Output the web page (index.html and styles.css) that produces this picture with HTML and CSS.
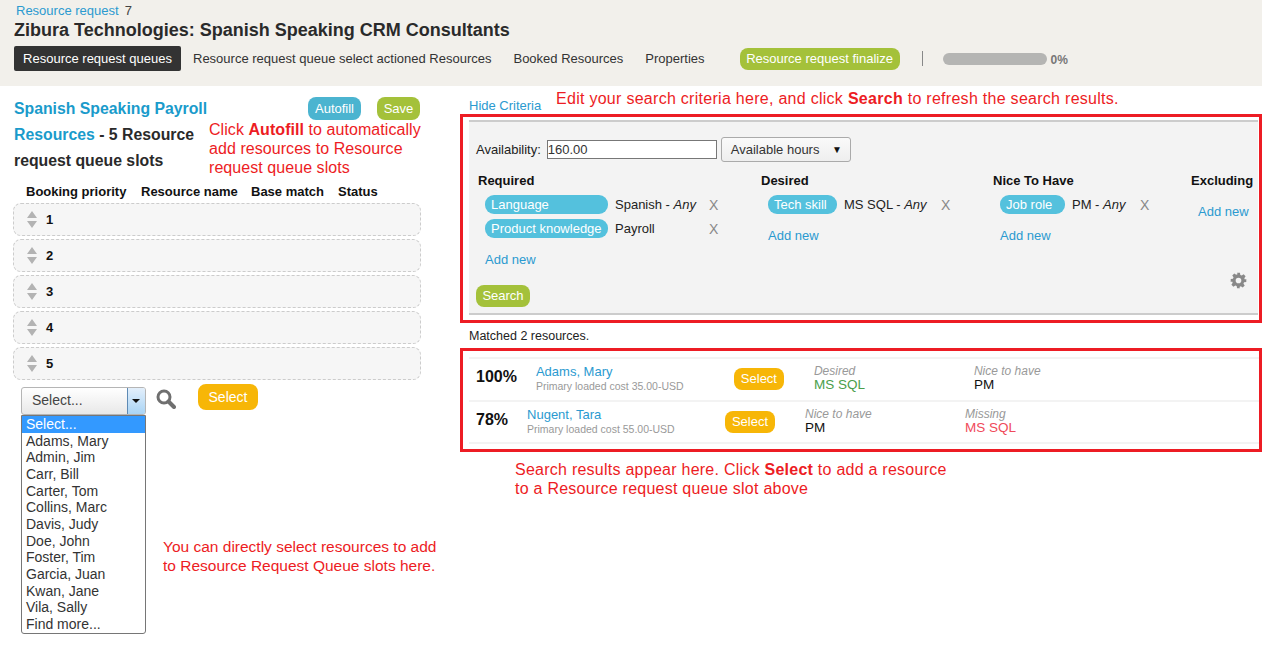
FILE: index.html
```html
<!DOCTYPE html>
<html lang="en">
<head>
    <meta charset="UTF-8">
    <meta name="viewport" content="width=device-width, initial-scale=1.0">
    <title>Resource request 7</title>
    <link rel="stylesheet" href="styles.css">
</head>
<body>

<!-- Page header -->
<div class="header">
    <div class="crumb"><a href="#">Resource request</a><span class="crumb-num">7</span></div>
    <h1 class="title">Zibura Technologies: Spanish Speaking CRM Consultants</h1>
    <div class="tabs">
        <a class="tab active" href="#">Resource request queues</a>
        <a class="tab" href="#">Resource request queue select actioned Resources</a>
        <a class="tab" href="#">Booked Resources</a>
        <a class="tab" href="#">Properties</a>
        <a class="btn finalize" href="#">Resource request finalize</a>
        <span class="divider"></span>
        <span class="progress"></span>
        <span class="progress-label">0%</span>
    </div>
</div>

<div class="main">
    <!-- Left column: queue slots -->
    <div class="left">
        <div class="left-top">
            <h2 class="queue-title">
                <span class="title-line"><a href="#">Spanish Speaking Payroll</a></span>
                <span class="title-line"><a href="#">Resources</a> - 5 Resource</span>
                <span class="title-line">request queue slots</span>
            </h2>
            <div class="left-actions">
                <a class="btn autofill" href="#">Autofill</a>
                <a class="btn save" href="#">Save</a>
            </div>
        </div>

        <div class="slot-head">
            <span class="col-priority">Booking priority</span>
            <span class="col-name">Resource name</span>
            <span class="col-match">Base match</span>
            <span>Status</span>
        </div>

        <div class="slot">
            <svg class="sort" viewBox="0 0 10 17"><path d="M5 0l5 7H0zM0 10h10l-5 7z"/></svg>
            <b>1</b>
        </div>
        <div class="slot">
            <svg class="sort" viewBox="0 0 10 17"><path d="M5 0l5 7H0zM0 10h10l-5 7z"/></svg>
            <b>2</b>
        </div>
        <div class="slot">
            <svg class="sort" viewBox="0 0 10 17"><path d="M5 0l5 7H0zM0 10h10l-5 7z"/></svg>
            <b>3</b>
        </div>
        <div class="slot">
            <svg class="sort" viewBox="0 0 10 17"><path d="M5 0l5 7H0zM0 10h10l-5 7z"/></svg>
            <b>4</b>
        </div>
        <div class="slot">
            <svg class="sort" viewBox="0 0 10 17"><path d="M5 0l5 7H0zM0 10h10l-5 7z"/></svg>
            <b>5</b>
        </div>

        <div class="picker">
            <div class="combo-wrap">
                <div class="combo">
                    <span class="combo-text">Select...</span>
                    <span class="combo-arrow"></span>
                </div>
                <div class="combo-list">
                    <div class="option current">Select...</div>
                    <div class="option">Adams, Mary</div>
                    <div class="option">Admin, Jim</div>
                    <div class="option">Carr, Bill</div>
                    <div class="option">Carter, Tom</div>
                    <div class="option">Collins, Marc</div>
                    <div class="option">Davis, Judy</div>
                    <div class="option">Doe, John</div>
                    <div class="option">Foster, Tim</div>
                    <div class="option">Garcia, Juan</div>
                    <div class="option">Kwan, Jane</div>
                    <div class="option">Vila, Sally</div>
                    <div class="option">Find more...</div>
                </div>
            </div>
            <svg class="lens" viewBox="0 0 20 20">
                <circle cx="8" cy="8" r="6" fill="none" stroke="#6f6f6f" stroke-width="3"/>
                <path d="M12.5 12.5l5.5 5.5" stroke="#6f6f6f" stroke-width="4" stroke-linecap="round"/>
            </svg>
            <a class="btn select-big" href="#">Select</a>
        </div>
    </div>

    <!-- Right column: criteria and results -->
    <div class="right">
        <a class="hide-link" href="#">Hide Criteria</a>

        <div class="red-box criteria-box">
            <div class="criteria">
                <div class="avail">
                    <label class="avail-label">Availability:</label>
                    <input class="avail-input" type="text" value="160.00">
                    <div class="hours">Available hours <span class="hours-arrow">▼</span></div>
                </div>

                <div class="crit-cols">
                    <div class="crit-col">
                        <div class="crit-title">Required</div>
                        <div class="crit-row">
                            <span class="pill wide">Language</span>
                            <span class="crit-value">Spanish - <i>Any</i></span>
                            <span class="x">X</span>
                        </div>
                        <div class="crit-row">
                            <span class="pill wide">Product knowledge</span>
                            <span class="crit-value">Payroll</span>
                            <span class="x">X</span>
                        </div>
                        <a class="add-new" href="#">Add new</a>
                    </div>
                    <div class="crit-col">
                        <div class="crit-title">Desired</div>
                        <div class="crit-row">
                            <span class="pill tech">Tech skill</span>
                            <span class="crit-value">MS SQL - <i>Any</i></span>
                            <span class="x">X</span>
                        </div>
                        <a class="add-new" href="#">Add new</a>
                    </div>
                    <div class="crit-col">
                        <div class="crit-title">Nice To Have</div>
                        <div class="crit-row">
                            <span class="pill job">Job role</span>
                            <span class="crit-value short">PM - <i>Any</i></span>
                            <span class="x">X</span>
                        </div>
                        <a class="add-new" href="#">Add new</a>
                    </div>
                    <div class="crit-col">
                        <div class="crit-title">Excluding</div>
                        <a class="add-new empty" href="#">Add new</a>
                    </div>
                </div>

                <a class="btn search" href="#">Search</a>

                <svg class="gear" viewBox="0 0 24 24">
                    <path d="M10 1h4l.6 3.2 1.9.8 2.7-1.8 2.8 2.8-1.8 2.7.8 1.9L23 10v4l-3.2.6-.8 1.9 1.8 2.7-2.8 2.8-2.7-1.8-1.9.8L13.999 23H10l-.6-3.2-1.9-.8-2.7 1.8-2.8-2.8 1.8-2.7-.8-1.9L1 14v-4l3.2-.6.8-1.9-1.8-2.7 2.8-2.8 2.7 1.8 1.9-.8zM12 8a4 4 0 1 0 0 8 4 4 0 0 0 0-8z" fill-rule="evenodd"/>
                </svg>
            </div>
        </div>

        <div class="matched">Matched 2 resources.</div>

        <div class="red-box results-box">
            <div class="result">
                <div class="pct">100%</div>
                <div class="who">
                    <a href="#">Adams, Mary</a>
                    <div class="cost">Primary loaded cost 35.00-USD</div>
                </div>
                <a class="btn select-small" href="#">Select</a>
                <div class="fit">
                    <div class="fit-label">Desired</div>
                    <div class="fit-value good">MS SQL</div>
                </div>
                <div class="fit">
                    <div class="fit-label">Nice to have</div>
                    <div class="fit-value">PM</div>
                </div>
            </div>
            <div class="result">
                <div class="pct">78%</div>
                <div class="who">
                    <a href="#">Nugent, Tara</a>
                    <div class="cost">Primary loaded cost 55.00-USD</div>
                </div>
                <a class="btn select-small" href="#">Select</a>
                <div class="fit">
                    <div class="fit-label">Nice to have</div>
                    <div class="fit-value">PM</div>
                </div>
                <div class="fit">
                    <div class="fit-label">Missing</div>
                    <div class="fit-value bad">MS SQL</div>
                </div>
            </div>
        </div>
    </div>
</div>

<!-- Red help notes lying over the page -->
<div class="note note-autofill">Click <b>Autofill</b> to automatically<br>add resources to Resource<br>request queue slots</div>
<div class="note note-search">Edit your search criteria here, and click <b>Search</b> to refresh the search results.</div>
<div class="note note-results">Search results appear here. Click <b>Select</b> to add a resource<br>to a Resource request queue slot above</div>
<div class="note note-direct">You can directly select resources to add<br>to Resource Request Queue slots here.</div>

</body>
</html>
```

FILE: styles.css
```css
* {
    box-sizing: border-box;
}

body {
    margin: 0;
    font-family: "Liberation Sans", Arial, sans-serif;
    font-size: 13px;
    color: #222;
    background: #fff;
    position: relative;
}

a {
    color: #2b9ad0;
    text-decoration: none;
}

/* Header */
.header {
    height: 86px;
    padding: 3px 0 0 14px;
    background: #f2f0eb;
}

.crumb {
    padding-left: 2px;
    line-height: 16px;
    color: #333;
}

.crumb-num {
    margin-left: 6px;
    color: #444;
}

.title {
    margin: 0;
    font-size: 18px;
    line-height: 22px;
    color: #2a2a2a;
}

.tabs {
    display: flex;
    align-items: center;
    margin-top: 5px;
    height: 25px;
}

.tab {
    color: #333;
    margin-right: 22px;
}

.tab.active {
    width: 167px;
    height: 25px;
    line-height: 25px;
    text-align: center;
    margin-right: 12px;
    color: #fff;
    background: #333;
    border-radius: 2px;
}

.btn {
    display: inline-block;
    color: #fff;
    text-align: center;
    border-radius: 8px;
}

.finalize {
    width: 160px;
    height: 22px;
    line-height: 22px;
    margin-left: 13px;
    background: #a4c13a;
}

.divider {
    width: 1px;
    height: 15px;
    margin: 0 20px 0 22px;
    background: #888;
}

.progress {
    width: 104px;
    height: 12px;
    border-radius: 6px;
    background: #b5b5b3;
}

.progress-label {
    margin-left: 4px;
    margin-top: 2px;
    font-size: 12px;
    font-weight: bold;
    color: #777;
}

/* Two columns */
.main {
    display: flex;
}

.left {
    width: 460px;
    flex: none;
    padding: 9px 0 0 13px;
}

.right {
    flex: 1;
    padding-top: 12px;
}

/* Left column */
.left-top {
    display: flex;
    height: 78px;
}

.queue-title {
    width: 195px;
    margin: 1px 0 0 1px;
    font-size: 15.8px;
    line-height: 26px;
    color: #2a2a2a;
}

.title-line {
    display: block;
    white-space: nowrap;
}

.queue-title a {
    color: #1a9bcb;
}

.left-actions {
    display: flex;
    gap: 16px;
    margin-left: 99px;
    align-items: flex-start;
    padding-top: 2px;
}

.autofill {
    width: 53px;
    height: 23px;
    line-height: 23px;
    background: #4bb4d0;
}

.save {
    width: 43px;
    height: 23px;
    line-height: 23px;
    background: #a4c13a;
}

.slot-head {
    display: flex;
    margin: 11px 0 3px;
    padding-left: 13px;
    line-height: 16px;
    font-weight: bold;
    color: #111;
}

.col-priority {
    width: 115px;
}

.col-name {
    width: 110px;
}

.col-match {
    width: 87px;
}

.slot {
    display: flex;
    align-items: center;
    width: 408px;
    height: 33px;
    margin-bottom: 3px;
    padding-left: 13px;
    background: #f6f6f6;
    border: 1px dashed #ccc;
    border-radius: 8px;
    color: #111;
}

.sort {
    width: 10px;
    height: 17px;
    margin-right: 9px;
    fill: #b3b3b3;
}

.picker {
    display: flex;
    align-items: flex-start;
    margin-left: 8px;
    margin-top: 4px;
}

.combo {
    display: flex;
    width: 125px;
    height: 28px;
    margin-top: 3px;
    background: linear-gradient(#fff, #e8e8e8);
    border: 1px solid #b5b5b5;
    border-radius: 3px;
    overflow: hidden;
}

.combo-text {
    flex: 1;
    padding-left: 10px;
    line-height: 24px;
    font-size: 14px;
    color: #444;
}

.combo-arrow {
    width: 18px;
    position: relative;
    background: linear-gradient(#e3effb, #a9d4f5);
    border-left: 1px solid #5e8ab4;
}

.combo-arrow::after {
    content: "";
    position: absolute;
    left: 4px;
    top: 11px;
    border: 4px solid transparent;
    border-top: 4px solid #111;
}

.combo-list {
    width: 125px;
    border: 1px solid #767676;
    border-radius: 0 0 3px 3px;
    background: #fff;
    font-size: 14px;
    color: #333;
}

.option {
    height: 16.67px;
    line-height: 16px;
    padding-left: 4px;
}

.option.current {
    background: #3399ff;
    color: #fff;
}

.lens {
    width: 20px;
    height: 20px;
    margin: 5px 0 0 10px;
}

.select-big {
    width: 60px;
    height: 26px;
    line-height: 26px;
    margin-left: 22px;
    font-size: 14px;
    background: #f7b607;
}

/* Right column */
.hide-link {
    display: block;
    margin-left: 9px;
    line-height: 16px;
}

.red-box {
    border: 3px solid #ed1c24;
}

.criteria-box {
    height: 209px;
    padding: 3px 0 0 6px;
}

.criteria {
    position: relative;
    height: 195px;
    padding: 15px 0 0 7px;
    margin-right: 1px;
    background: #f3f3f3;
    border-top: 2px solid #ccc;
    border-bottom: 2px solid #ccc;
}

.avail {
    display: flex;
    align-items: center;
}

.avail-label {
    margin-right: 6px;
}

.avail-input {
    width: 170px;
    height: 19px;
    padding: 0;
    border: 1px solid #777;
    font: 13px "Liberation Sans", Arial, sans-serif;
    color: #333;
}

.hours {
    display: flex;
    justify-content: space-between;
    align-items: center;
    width: 130px;
    height: 25px;
    margin-left: 4px;
    padding: 0 8px 0 9px;
    background: linear-gradient(#fafafa, #eee);
    border: 1px solid #aaa;
    border-radius: 3px;
    color: #333;
}

.hours-arrow {
    font-size: 10px;
    color: #111;
}

.crit-cols {
    display: grid;
    grid-template-columns: 283px 232px 198px 1fr;
    margin-top: 11px;
    height: 110px;
}

.crit-title {
    margin: 0 0 6px 2px;
    line-height: 16px;
    font-weight: bold;
    color: #111;
}

.crit-row {
    display: flex;
    align-items: center;
    height: 19px;
    margin: 0 0 5px 9px;
    color: #222;
}

.pill {
    height: 19px;
    line-height: 19px;
    padding: 0 6px;
    color: #fff;
    background: #54c1dd;
    border-radius: 9px;
}

.pill.wide {
    width: 123px;
}

.pill.tech {
    width: 69px;
}

.pill.job {
    width: 65px;
}

.crit-value {
    width: 94px;
    margin-left: 7px;
}

.crit-value.short {
    width: 68px;
}

.crit-col:nth-child(2) .crit-value {
    width: 97px;
}

.x {
    color: #888;
    font-size: 14px;
}

.add-new {
    display: block;
    margin: 14px 0 0 9px;
    line-height: 16px;
}

.add-new.empty {
    margin: 15px 0 0 9px;
}

.search {
    width: 54px;
    height: 22px;
    line-height: 22px;
    margin-top: 2px;
    background: #a4c13a;
}

.gear {
    position: absolute;
    right: 11px;
    bottom: 24px;
    width: 17px;
    height: 17px;
    fill: #888;
}

.matched {
    margin: 5px 0 4px 9px;
    line-height: 16px;
    font-size: 12.5px;
}

.results-box {
    height: 104px;
    padding: 6px 0 0 6px;
}

.result {
    display: flex;
    align-items: flex-start;
    height: 43px;
    padding: 5px 0 0 7px;
    border-top: 2px solid #f3f3f3;
}

.result:last-child {
    height: 44px;
    border-bottom: 2px solid #f3f3f3;
}

.pct {
    margin: 3px 19px 0 0;
    font-size: 16px;
    line-height: 20px;
    font-weight: bold;
    color: #111;
}

.who {
    width: 198px;
    line-height: 16px;
}

.cost {
    font-size: 10.5px;
    line-height: 12px;
    color: #999;
}

.select-small {
    width: 50px;
    height: 22px;
    line-height: 22px;
    margin: 4px 30px 0 0;
    background: #f7b607;
}

.fit {
    width: 160px;
    line-height: 14px;
}

.fit-label {
    font-size: 12px;
    font-style: italic;
    color: #999;
}

.fit-value {
    font-size: 13.5px;
    color: #111;
}

.fit-value.good {
    color: #4a9e4a;
}

.fit-value.bad {
    color: #f04a5a;
}

/* Help notes */
.note {
    position: absolute;
    font-size: 16px;
    line-height: 19px;
    color: #ed1c24;
}

.note-autofill {
    left: 209px;
    top: 120px;
    letter-spacing: 0.06px;
}

.note-search {
    left: 556px;
    top: 89px;
    letter-spacing: 0.28px;
}

.note-results {
    left: 515px;
    top: 460px;
    letter-spacing: 0.25px;
}

.note-direct {
    left: 163px;
    top: 537px;
    font-size: 15.5px;
}
```
